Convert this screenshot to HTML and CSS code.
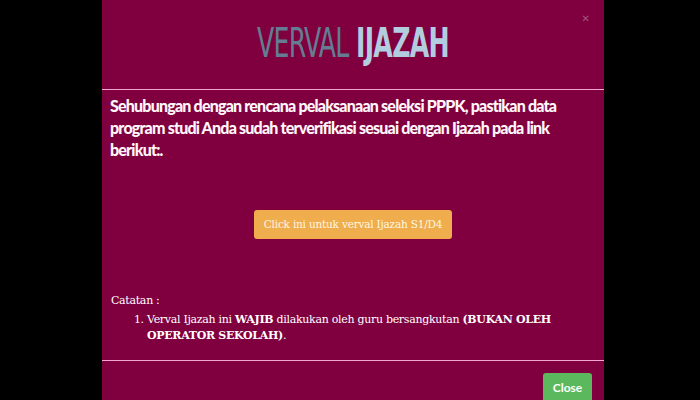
FILE: index.html
```html
<!DOCTYPE html>
<html>
<head>
<meta charset="utf-8">
<link rel="stylesheet" href="styles.css">
</head>
<body>
<div class="modal">
  <div class="modal-header">
    <span class="close-x">&#x2715;</span>
    <h1 class="title"><span class="t1">VERVAL</span> <span class="t2">IJAZAH</span></h1>
  </div>
  <div class="modal-body">
    <p class="lead">Sehubungan dengan rencana pelaksanaan seleksi PPPK, pastikan data program studi Anda sudah terverifikasi sesuai dengan Ijazah pada link berikut:.</p>
    <div class="btn-row"><a class="btn-orange">Click ini untuk verval Ijazah S1/D4</a></div>
    <div class="note">
      <div class="note-title">Catatan :</div>
      <ol class="note-list">
        <li>Verval Ijazah ini <b>WAJIB</b> dilakukan oleh guru bersangkutan <b>(BUKAN OLEH OPERATOR SEKOLAH)</b>.</li>
      </ol>
    </div>
  </div>
  <div class="modal-footer">
    <a class="btn-green">Close</a>
  </div>
</div>
</body>
</html>
```
FILE: styles.css
```css
html, body { margin: 0; padding: 0; height: 400px; overflow: hidden; background: #000; }
.modal { width: 502px; margin-left: 102px; background: #80003f; height: 420px; color: #fff; }
.modal-header { position: relative; height: 89px; border-bottom: 1px solid #f3a9cf; display: flex; justify-content: center; }
.close-x { position: absolute; right: 14px; top: 13px; font-family: "DejaVu Sans", sans-serif; font-size: 10px; color: #a05a7a; }
.title { margin: 23px 0 0; font-family: "DejaVu Sans Condensed", "DejaVu Sans", sans-serif; font-weight: normal; font-size: 40px; line-height: 40px; letter-spacing: -1px; transform: scaleX(0.7); white-space: nowrap; }
.t1 { color: #647d92; }
.t2 { color: #b3cde0; font-weight: bold; }
.modal-body { padding: 5px 8px 0 8px; height: 265px; border-bottom: 1px solid #f3a9cf; }
.lead { margin: 0; font-family: "Lato", sans-serif; font-weight: 900; font-size: 16px; line-height: 22px; letter-spacing: -0.8px; color: #fff6fa; }
.btn-row { display: flex; justify-content: center; margin-top: 49px; }
.btn-orange { display: block; background: #f0ad4e; color: #fff6e0; border-radius: 3px; width: 198px; height: 29px; line-height: 29px; text-align: center; font-family: "DejaVu Serif", serif; font-size: 10.5px; letter-spacing: -0.2px; }
.note { margin-top: 54px; font-family: "DejaVu Serif", serif; font-size: 11px; line-height: 16px; letter-spacing: -0.3px; }
.note-title { padding-left: 1px; }
.note-list { margin: 3px 0 0; padding-left: 37px; width: 410px; }
.modal-footer { display: flex; justify-content: flex-end; padding: 12px 12px 0 0; }
.btn-green { display: block; background: #5cb85c; color: #fff; border-radius: 3px; width: 49px; height: 30px; line-height: 30px; text-align: center; font-family: "Lato", sans-serif; font-weight: bold; font-size: 12px; }
```
